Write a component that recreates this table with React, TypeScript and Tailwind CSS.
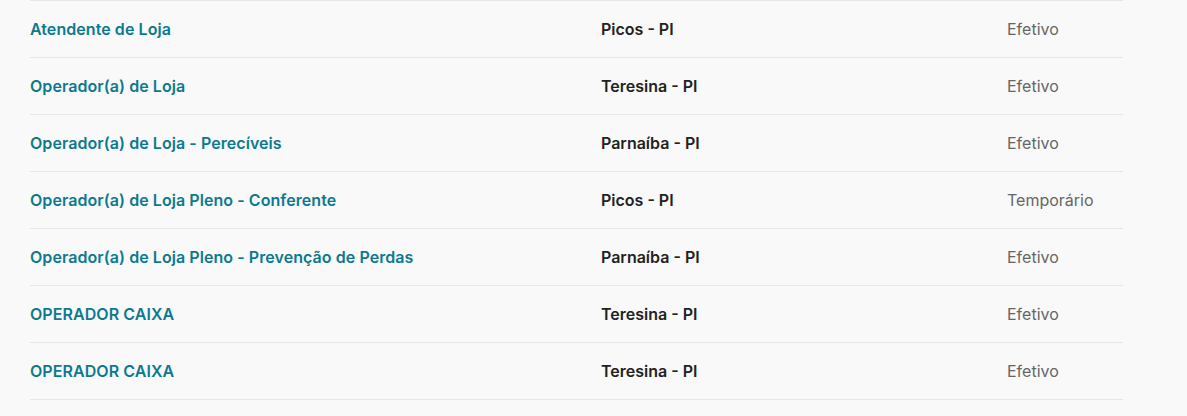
const vagas = [
  { titulo: "Atendente de Loja", local: "Picos - PI", tipo: "Efetivo" },
  { titulo: "Operador(a) de Loja", local: "Teresina - PI", tipo: "Efetivo" },
  { titulo: "Operador(a) de Loja - Perecíveis", local: "Parnaíba - PI", tipo: "Efetivo" },
  { titulo: "Operador(a) de Loja Pleno - Conferente", local: "Picos - PI", tipo: "Temporário" },
  { titulo: "Operador(a) de Loja Pleno - Prevenção de Perdas", local: "Parnaíba - PI", tipo: "Efetivo" },
  { titulo: "OPERADOR CAIXA", local: "Teresina - PI", tipo: "Efetivo" },
  { titulo: "OPERADOR CAIXA", local: "Teresina - PI", tipo: "Efetivo" },
];

export default function App() {
  return (
    <div className="min-h-[416px] bg-[#f9f9f9] pl-[30px] font-['Inter',sans-serif] text-base">
      <ul className="w-[1093px] border-b border-[#e6e6e6]">
        {vagas.map((vaga, i) => (
          <li
            key={i}
            className="grid h-[57px] grid-cols-[571px_406px_1fr] items-center border-t border-[#e6e6e6]"
          >
            <a href="#" className="font-semibold tracking-[0.004em] text-[#0c7a8e]">
              {vaga.titulo}
            </a>
            <span className="font-semibold text-[#222222]">{vaga.local}</span>
            <span className="text-[#666666]">{vaga.tipo}</span>
          </li>
        ))}
      </ul>
    </div>
  );
}
